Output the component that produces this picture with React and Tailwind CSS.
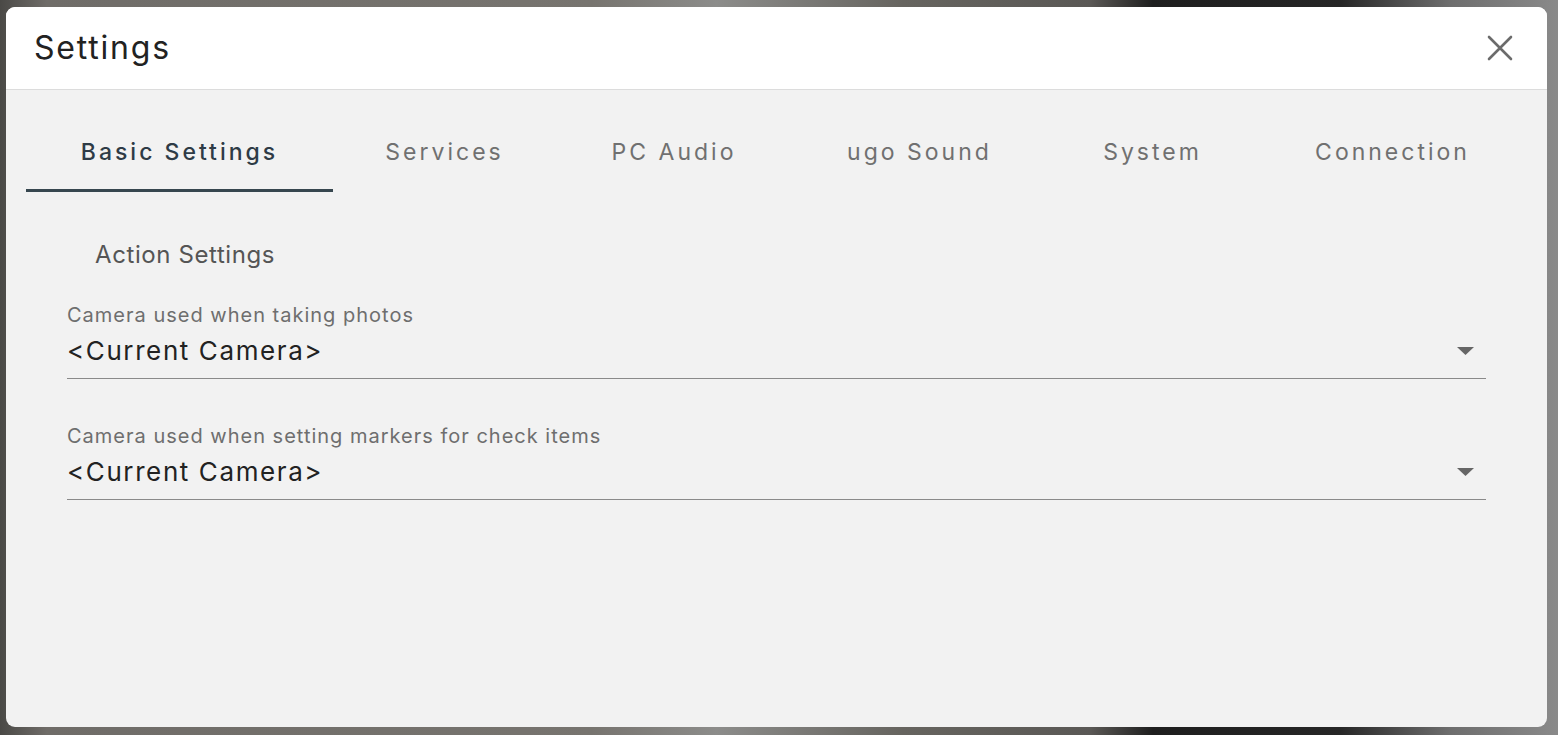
import React from "react";

const tabs = [
  { name: "Basic Settings", w: "w-[307px]" },
  { name: "Services", w: "w-[223px]" },
  { name: "PC Audio", w: "w-[236px]" },
  { name: "ugo Sound", w: "w-[255px]" },
  { name: "System", w: "w-[211px]" },
  { name: "Connection", w: "w-[269px]" },
];

const fields = [
  { label: "Camera used when taking photos", value: "<Current Camera>" },
  { label: "Camera used when setting markers for check items", value: "<Current Camera>" },
];

function ArrowDown() {
  return (
    <svg width="17" height="8" viewBox="0 0 17 8" className="shrink-0">
      <path d="M0 0h17L8.5 8z" fill="#666666" />
    </svg>
  );
}

export default function App() {
  return (
    <div
      className="w-full h-[735px] pt-[7px] pl-[6px] bg-[linear-gradient(90deg,#4a4946_0%,#6f6c68_3%,#77746f_38%,#8c8c8a_46%,#66645f_58%,#5a5855_70%,#1e1e1e_74%,#262626_86%,#6d6d6d_93%,#8a8a8a_100%)]"
      style={{ fontFamily: "Inter, 'Open Sans', sans-serif" }}
    >
      <div className="w-[1541px] h-[720px] rounded-[9px] overflow-hidden flex flex-col bg-[#f2f2f2]">
        {/* HEADER */}
        <div className="h-[83px] shrink-0 bg-white border-b border-[#dcdcdc] flex items-center justify-between pl-[28px] pr-[34px]">
          <h1 className="text-[32px] text-[#222] tracking-[1.8px]">Settings</h1>
          <svg width="26" height="26" viewBox="0 0 26 26">
            <path d="M2 2L24 24M24 2L2 24" stroke="#6b6b6b" strokeWidth="2.6" strokeLinecap="round" />
          </svg>
        </div>

        {/* BODY */}
        <div className="flex-1 pt-[22px] pl-[20px]">
          <div className="flex">
            {tabs.map((t, i) => (
              <div
                key={t.name}
                className={
                  t.w +
                  " h-[80px] pt-[4px] flex items-center justify-center text-[23px] tracking-[3px] border-b-[3px] " +
                  (i === 0
                    ? "text-[#2e3b46] font-medium border-[#37474f]"
                    : "text-[#707070] border-transparent")
                }
              >
                {t.name}
              </div>
            ))}
          </div>

          <div className="pl-[41px] pr-[61px]">
            <div className="mt-[48px] pl-[28px] text-[24px] tracking-[0.6px] text-[#555] leading-[30px]">
              Action Settings
            </div>

            {fields.map((f, i) => (
              <div
                key={i}
                className={(i === 0 ? "mt-[33px]" : "mt-[45px]") + " border-b border-[#8a8a8a] pb-[11px]"}
              >
                <div className="text-[20px] tracking-[1px] text-[#6e6e6e] leading-[24px]">{f.label}</div>
                <div className="mt-[8px] flex items-center justify-between pr-[12px] h-[32px]">
                  <span className="text-[26px] tracking-[1.6px] text-[#222] leading-[32px]">{f.value}</span>
                  <ArrowDown />
                </div>
              </div>
            ))}
          </div>
        </div>
      </div>
    </div>
  );
}
